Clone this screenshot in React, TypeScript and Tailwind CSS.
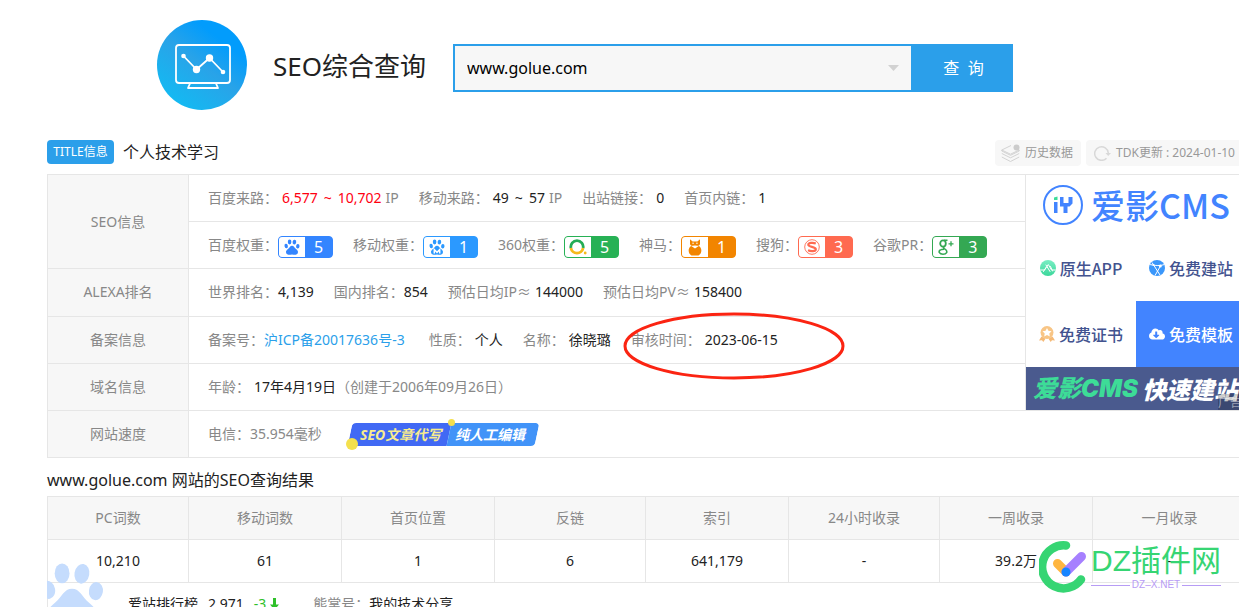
import { useState } from 'react';
import type { ReactNode } from 'react';
import { FaCloudDownloadAlt } from 'react-icons/fa';

function LogoMark() {
    return (
        <svg width="90" height="90" viewBox="0 0 90 90" className="shrink-0" aria-hidden="true">
            <defs>
                <linearGradient id="logo-bg" x1="0.2" y1="0.9" x2="0.8" y2="0.1">
                    <stop offset="0" stopColor="#14b9f2" />
                    <stop offset="0.5" stopColor="#29a3e8" />
                    <stop offset="0.85" stopColor="#029cfc" />
                </linearGradient>
            </defs>
            <circle cx="45" cy="45" r="45" fill="url(#logo-bg)" />
            <g fill="none" stroke="#fff" strokeWidth="1.8" strokeLinejoin="round">
                <rect x="19" y="25" width="54" height="38" rx="3" />
                <path d="M33 63.500L31 68H61L59 63.500" />
                <path d="M26.500 36L39.500 49.500L52.500 38L66 52" />
            </g>
            <g fill="#fff">
                <circle cx="26.500" cy="36" r="2.300" />
                <circle cx="39.500" cy="49.500" r="3.700" />
                <circle cx="52.500" cy="38" r="3.700" />
                <circle cx="66" cy="52" r="2.300" />
            </g>
        </svg>
    );
}

function Paw({ color, size = 16, mobile = false }: { color: string; size?: number; mobile?: boolean }) {
    return (
        <svg width={size} height={size} viewBox="0 0 16 16" aria-hidden="true">
            <g fill={color}>
                <ellipse cx="2.200" cy="7" rx="1.700" ry="2.200" transform="rotate(-12 2.200 7)" />
                <ellipse cx="5.600" cy="3" rx="1.800" ry="2.400" />
                <ellipse cx="10.400" cy="3.100" rx="1.800" ry="2.400" transform="rotate(10 10.400 3.100)" />
                <ellipse cx="13.800" cy="7.300" rx="1.700" ry="2.200" transform="rotate(8 13.800 7.300)" />
                <path d="M8 6.700C9.900 6.700 10.500 8.700 12 10C13.400 11.200 14.300 12 13.900 13.700C13.400 15.900 11 15.900 8 15.500C5 15.900 2.600 15.900 2.100 13.700C1.700 12 2.600 11.200 4 10C5.500 8.700 6.100 6.700 8 6.700Z" />
            </g>
            {mobile && <path d="M5.300 14.500V10.500L8 13.300L10.700 10.500V14.500" fill="none" stroke="#fff" strokeWidth="1.500" />}
        </svg>
    );
}

function Ring360() {
    return (
        <svg width="18" height="16" viewBox="0 0 18 16" aria-hidden="true">
            <g fill="none" strokeWidth="2.800">
                <path d="M1.900 9A6.200 6.200 0 1 1 14.100 9" stroke="#25ad56" />
                <path d="M1.900 9A6.200 6.200 0 0 0 14.100 9" stroke="#f6b91c" />
            </g>
            <circle cx="16.200" cy="14" r="1.400" fill="#f6b91c" />
        </svg>
    );
}

function Shenma() {
    return (
        <svg width="14" height="17" viewBox="0 0 14 17" aria-hidden="true">
            <path d="M2 0.300L4.600 2.600H9.400L12 0.300V4.500C12 5.700 11.300 6.300 10.700 6.700H3.300C2.700 6.300 2 5.700 2 4.500Z" fill="#f28500" />
            <path d="M3.200 7C-0.500 9 0 14.500 3.500 16.500H10.500C14 14.500 14.500 9 10.800 7L7 9.500Z" fill="#f28500" />
            <path d="M4.200 4.200H6M8 4.200H9.800M6.200 6.500L7 7.600L7.800 6.500" fill="none" stroke="#fff" strokeWidth="0.900" />
        </svg>
    );
}

function Sogou() {
    return (
        <svg width="16" height="16" viewBox="0 0 16 16" fill="none" stroke="#ff6a50" aria-hidden="true">
            <circle cx="8" cy="8" r="7.300" strokeWidth="0.900" />
            <path d="M11.800 4.600C9.500 3.600 4.300 3.500 4.300 5.800C4.300 8.300 11.800 7.500 11.800 10.200C11.800 12.700 6.500 12.500 4 11.200" strokeWidth="2.200" />
        </svg>
    );
}

function GooglePlus() {
    return (
        <svg width="16" height="16" viewBox="0 0 16 16" fill="none" stroke="#34a853" aria-hidden="true">
            <ellipse cx="5" cy="4.500" rx="2.800" ry="3.100" strokeWidth="1.800" />
            <path d="M6 1.300H9.500M6.500 7.500C4.500 8.500 5.500 9.300 7 10.200C10.500 12.500 8.500 15.200 5 15.200C1.300 15.200 0 12.500 2.300 11C3.300 10.300 4.600 10.200 6 10.200" strokeWidth="1.500" />
            <path d="M13 2.300V7.300M10.500 4.800H15.500" strokeWidth="1.300" />
        </svg>
    );
}

function AppIcon() {
    return (
        <svg width="16" height="16" viewBox="0 0 16 16" aria-hidden="true">
            <defs>
                <linearGradient id="app-bg" x1="0" y1="0" x2="0" y2="1">
                    <stop offset="0" stopColor="#7aeec4" />
                    <stop offset="1" stopColor="#3bd79b" />
                </linearGradient>
            </defs>
            <circle cx="8" cy="8" r="8" fill="url(#app-bg)" />
            <path d="M0.800 10H4.500L8.300 4.500L11.500 10H15.200M3.500 11.500L6 7.500M6 5L10 11.500M10.500 6.500L12.500 11" fill="none" stroke="#fff" strokeWidth="1" strokeLinecap="round" />
        </svg>
    );
}

function Globe() {
    return (
        <svg width="16" height="16" viewBox="0 0 16 16" aria-hidden="true">
            <circle cx="8" cy="8" r="8" fill="#3a97fb" />
            <path d="M0.500 4.500C4 5 9 6.500 15.500 4.500M3 2.500L11 15M11.500 6L6 15.500" fill="none" stroke="#fff" strokeWidth="1" />
            <circle cx="11.300" cy="6" r="1.500" fill="#fff" />
            <circle cx="4.500" cy="5" r="1.100" fill="#fff" />
        </svg>
    );
}

function Medal() {
    return (
        <svg width="16" height="16" viewBox="0 0 16 16" aria-hidden="true">
            <circle cx="8" cy="6.500" r="6.500" fill="#f8c585" />
            <path d="M8 2L9.400 4.800L12.500 5.200L10.300 7.400L10.800 10.500L8 9L5.200 10.500L5.700 7.400L3.500 5.200L6.600 4.800Z" fill="#fff" />
            <path d="M2.500 10.500L0 14.500L3 14.300L4.300 16L6.500 12.800ZM13.500 10.500L16 14.500L13 14.300L11.700 16L9.500 12.800Z" fill="#f5b975" />
        </svg>
    );
}

const BADGE_COLORS = {
    baidu: 'border-[#3385ff] bg-[#3385ff]',
    mobile: 'border-[#2b99ff] bg-[#2b99ff]',
    so360: 'border-[#27b155] bg-[#27b155]',
    shenma: 'border-[#f28500] bg-[#f28500]',
    sogou: 'border-[#ff6a50] bg-[#ff6a50]',
    google: 'border-[#34a853] bg-[#34a853]',
};

const weights: { label: string; kind: keyof typeof BADGE_COLORS; value: number; icon: ReactNode }[] = [
    { label: '百度权重：', kind: 'baidu', value: 5, icon: <Paw color="#3385ff" /> },
    { label: '移动权重：', kind: 'mobile', value: 1, icon: <Paw color="#2b99ff" mobile /> },
    { label: '360权重：', kind: 'so360', value: 5, icon: <Ring360 /> },
    { label: '神马：', kind: 'shenma', value: 1, icon: <Shenma /> },
    { label: '搜狗：', kind: 'sogou', value: 3, icon: <Sogou /> },
    { label: '谷歌PR：', kind: 'google', value: 3, icon: <GooglePlus /> },
];

const resultCols = [
    { name: 'PC词数', value: '10,210', width: 'w-[141px]' },
    { name: '移动词数', value: '61', width: 'w-[153px]' },
    { name: '首页位置', value: '1', width: 'w-[153px]' },
    { name: '反链', value: '6', width: 'w-[151px]' },
    { name: '索引', value: '641,179', width: 'w-[143px]' },
    { name: '24小时收录', value: '-', width: 'w-[151px]' },
    { name: '一周收录', value: '39.2万', width: 'w-[153px]' },
    { name: '一月收录', value: '-', width: '' },
];

function Item({ label, children }: { label: string; children: ReactNode }) {
    return (
        <span className="flex items-center whitespace-nowrap">
            {label}
            {children}
        </span>
    );
}

function Range({ from, to }: { from: string; to: string }) {
    return (
        <span className="mx-1 flex gap-[6px]">
            <span>{from}</span>
            <span>~</span>
            <span>{to}</span>
        </span>
    );
}

function Row({ title, rowSpan, colSpan, children, ad }: { title?: string; rowSpan?: number; colSpan?: number; children: ReactNode; ad?: ReactNode }) {
    return (
        <tr className="h-[47px]">
            {title && (
                <th scope="row" rowSpan={rowSpan} className="border border-[#e6e6e6] bg-[#f7f7f7] font-normal">
                    {title}
                </th>
            )}
            <td colSpan={colSpan} className="border border-[#e6e6e6] pl-[19px]">
                <div className="flex items-center gap-5">{children}</div>
            </td>
            {ad}
        </tr>
    );
}

function AdPanel() {
    return (
        <div className="relative text-base font-medium leading-6 text-[#43538f] font-['Noto_Sans_CJK_SC',sans-serif]">
            <a href="#cms" className="flex h-[60px] items-center gap-2 pl-[17px] text-[#4284ff]">
                <svg width="40" height="40" viewBox="0 0 40 40" aria-hidden="true">
                    <circle cx="20" cy="20" r="19" fill="none" stroke="#4284ff" strokeWidth="2" />
                    <path d="M11 12.500L14.500 11.500V15H11Z" fill="#3ddc97" />
                    <path d="M11 17H14.500V28H11ZM17 12H20.500V18H25.500V12H29.500V18.500L26.500 21.500H24.500V28H20.500V21.500H17Z" fill="#4284ff" />
                </svg>
                <span className="text-[34px] leading-10">爱影CMS</span>
            </a>
            <div className="grid grid-cols-2">
                <a href="#app" className="flex h-[66px] items-center justify-center gap-1">
                    <AppIcon />
                    原生APP
                </a>
                <a href="#site" className="flex h-[66px] items-center justify-center gap-1">
                    <Globe />
                    免费建站
                </a>
                <a href="#cert" className="flex h-[66px] items-center justify-center gap-1">
                    <Medal />
                    免费证书
                </a>
                <a href="#template" className="flex h-[66px] items-center justify-center gap-1 bg-[#4284ff] text-white">
                    <FaCloudDownloadAlt size={16} />
                    免费模板
                </a>
            </div>
            <a href="#build" className="flex h-[43px] items-center overflow-hidden whitespace-nowrap bg-[#4a5a8e] pl-[7px] text-2xl font-black italic text-white">
                <span className="mr-1 text-[#3ddc97] font-['Inter','Noto_Sans_CJK_SC',sans-serif]">爱影CMS</span>
                快速建站
            </a>
            <span className="absolute bottom-0 right-0 bg-black/20 pr-1 text-xs font-normal leading-4 text-white/50">广告</span>
        </div>
    );
}

function WritingBanner() {
    return (
        <a href="#writing" className="relative ml-2 text-sm font-bold italic leading-[23px]">
            <span className="flex -skew-x-12 overflow-hidden rounded-sm">
                <span className="bg-[#4169f4] pl-[10px] pr-2 text-[#f8ec8e]">
                    <span className="block skew-x-12">SEO文章代写</span>
                </span>
                <span className="bg-[#4193f8] pl-[6px] pr-3 text-white">
                    <span className="block skew-x-12">纯人工编辑</span>
                </span>
            </span>
            <span className="absolute -bottom-1 -left-1 size-3 rounded-full bg-[#f4e04d]" />
            <span className="absolute -top-1 left-[98px] size-[7px] rounded-full bg-[#f4e04d]" />
        </a>
    );
}

function Watermark() {
    return (
        <div className="pointer-events-none absolute bottom-[14px] right-[18px] flex items-center gap-1">
            <svg width="48" height="52" viewBox="0 0 48 52" fill="none" strokeLinecap="round" aria-hidden="true">
                <path d="M27 4.500A21.500 21.500 0 1 0 42 38.500" stroke="#36d573" strokeWidth="8.500" />
                <path d="M18.500 22.500L27 31" stroke="#ffb640" strokeWidth="9" />
                <path d="M27 31L42.500 15.500" stroke="#a680ff" strokeWidth="9" />
                <circle cx="27" cy="31" r="4.500" fill="#1785ff" />
            </svg>
            <div className="font-['Liberation_Sans','Noto_Sans_CJK_SC',sans-serif]">
                <div className="text-[30px] leading-9 text-[#36d573]">DZ插件网</div>
                <div className="flex items-center gap-[2px] text-[10px] leading-3 text-[#b79cf5]">
                    <span className="h-px flex-1 bg-[#b79cf5]" />
                    DZ–X.NET
                    <span className="h-px flex-1 bg-[#b79cf5]" />
                </div>
            </div>
        </div>
    );
}

export default function App() {
    const [domain, setDomain] = useState('www.golue.com');

    return (
        <div className="relative h-screen overflow-hidden bg-white pl-[47px] text-sm leading-5 text-[#888] font-['Noto_Sans','Noto_Sans_CJK_SC',sans-serif]">
            <div className="min-w-[1200px]">
                <header className="flex items-center pl-[110px] pt-5">
                    <LogoMark />
                    <h1 className="ml-[26px] mt-[2px] w-[180px] whitespace-nowrap text-[26px] leading-9 text-[#222]">SEO综合查询</h1>
                    <form className="mt-[6px] flex h-12 w-[560px]" onSubmit={(e) => e.preventDefault()}>
                        <div className="flex flex-1 items-center border-2 border-r-0 border-[#2b9fea] bg-[#f7f7f7]">
                            <input
                                aria-label="域名"
                                value={domain}
                                onChange={(e) => setDomain(e.target.value)}
                                className="h-full min-w-0 flex-1 px-3 text-base text-black outline-none"
                            />
                            <button type="button" aria-label="查询历史" className="px-3">
                                <svg width="11" height="6" viewBox="0 0 11 6" aria-hidden="true">
                                    <path d="M0 0H11L5.500 6Z" fill="#d2d2d2" />
                                </svg>
                            </button>
                        </div>
                        <button type="submit" className="w-[102px] whitespace-pre bg-[#2b9fea] pl-[3px] text-base text-white">
                            查{'  '}询
                        </button>
                    </form>
                </header>

                <div className="mt-[30px] flex h-[26px] items-start justify-between">
                    <div className="flex items-center">
                        <span className="w-[67px] whitespace-nowrap rounded-sm bg-[#2b9fea] text-center text-xs leading-6 text-white">TITLE信息</span>
                        <span className="ml-[9px] text-base leading-6 text-[#222]">个人技术学习</span>
                    </div>
                    <div className="flex gap-[5px] text-xs text-[#999]">
                        <button type="button" className="flex h-[26px] w-[86px] items-center gap-[5px] whitespace-nowrap rounded-sm bg-[#f7f7f7] pl-[6px]">
                            <svg width="19" height="19" viewBox="0 0 19 19" fill="none" stroke="#d2d2d2" aria-hidden="true">
                                <path d="M10 1.500L0.800 6L9.500 10.200L18.200 6L15 4.300M0.800 9.500L9.500 13.800L18.200 9.500M0.800 13L9.500 17.500L18.200 13M0.800 6V7L9.500 11.300L18.200 7V6" />
                                <circle cx="15.500" cy="3.500" r="3" fill="#ccc" stroke="none" />
                            </svg>
                            历史数据
                        </button>
                        <button type="button" className="flex h-[26px] items-center gap-[5px] whitespace-nowrap rounded-sm bg-[#f7f7f7] pl-2 pr-3">
                            <svg width="17" height="16" viewBox="0 0 17 16" fill="none" stroke="#d8d8d8" aria-hidden="true">
                                <path d="M12.500 13.200A6.800 6.800 0 1 1 14.300 8" strokeWidth="1.500" />
                                <path d="M11.500 8H17L14.200 11Z" fill="#d8d8d8" stroke="none" />
                            </svg>
                            TDK更新 : 2024-01-10
                        </button>
                    </div>
                </div>

                <table className="mt-2 w-full table-fixed border-collapse">
                    <colgroup>
                        <col className="w-[141px]" />
                        <col />
                        <col className="w-[221px]" />
                    </colgroup>
                    <tbody>
                        <Row
                            title="SEO信息"
                            rowSpan={2}
                            ad={
                                <td rowSpan={5} className="border border-[#e6e6e6] p-0 align-top">
                                    <AdPanel />
                                </td>
                            }
                        >
                            <Item label="百度来路：">
                                <span className="text-[#f01]">
                                    <Range from="6,577" to="10,702" />
                                </span>
                                IP
                            </Item>
                            <Item label="移动来路：">
                                <span className="text-[#222]">
                                    <Range from="49" to="57" />
                                </span>
                                IP
                            </Item>
                            <Item label="出站链接：">
                                <span className="ml-1 text-[#222]">0</span>
                            </Item>
                            <Item label="首页内链：">
                                <span className="ml-1 text-[#222]">1</span>
                            </Item>
                        </Row>
                        <Row>
                            {weights.map((w) => (
                                <Item key={w.kind} label={w.label}>
                                    <span className={`mt-1 flex h-[22px] w-[55px] overflow-hidden rounded border ${BADGE_COLORS[w.kind]}`}>
                                        <span className="flex w-[26px] items-center justify-center bg-white">{w.icon}</span>
                                        <span className="flex-1 text-center text-base leading-5 text-white">{w.value}</span>
                                    </span>
                                </Item>
                            ))}
                        </Row>
                        <Row title="ALEXA排名">
                            <Item label="世界排名：">
                                <span className="text-[#222]">4,139</span>
                            </Item>
                            <Item label="国内排名：">
                                <span className="text-[#222]">854</span>
                            </Item>
                            <Item label="预估日均IP≈">
                                <span className="ml-1 text-[#222]">144000</span>
                            </Item>
                            <Item label="预估日均PV≈">
                                <span className="ml-1 text-[#222]">158400</span>
                            </Item>
                        </Row>
                        <Row title="备案信息">
                            <Item label="备案号：">
                                <a href="#icp" className="mr-1 text-[#2b9fea]">沪ICP备20017636号-3</a>
                            </Item>
                            <Item label="性质：">
                                <span className="ml-1 text-[#222]">个人</span>
                            </Item>
                            <Item label="名称：">
                                <span className="ml-1 text-[#222]">徐晓璐</span>
                            </Item>
                            <span className="relative">
                                <Item label="审核时间：">
                                    <span className="ml-1 text-[#222]">2023-06-15</span>
                                </Item>
                                <svg width="222" height="68" viewBox="0 0 222 68" className="pointer-events-none absolute -left-2 -top-[18px] max-w-none" aria-hidden="true">
                                    <ellipse cx="111" cy="34" rx="109" ry="32" fill="none" stroke="#fb2412" strokeWidth="3" />
                                </svg>
                            </span>
                        </Row>
                        <Row title="域名信息">
                            <Item label="年龄：">
                                <span className="ml-1 text-[#222]">17年4月19日</span>（创建于2006年09月26日）
                            </Item>
                        </Row>
                        <Row title="网站速度" colSpan={2}>
                            <Item label="电信：">35.954毫秒</Item>
                            <WritingBanner />
                        </Row>
                    </tbody>
                </table>

                <h2 className="pb-1 pt-[10px] text-base leading-6 text-[#222]">www.golue.com 网站的SEO查询结果</h2>

                <table className="w-full table-fixed border-collapse text-center">
                    <thead>
                        <tr className="h-[43px] bg-[#f7f7f7]">
                            {resultCols.map((c) => (
                                <th key={c.name} scope="col" className={`border border-[#e6e6e6] font-normal ${c.width}`}>
                                    {c.name}
                                </th>
                            ))}
                        </tr>
                    </thead>
                    <tbody>
                        <tr className="h-[43px] text-[#222]">
                            {resultCols.map((c) => (
                                <td key={c.name} className="border border-[#e6e6e6]">{c.value}</td>
                            ))}
                        </tr>
                    </tbody>
                </table>

                <div className="flex gap-[10px] border-l border-[#e6e6e6] pl-20 pt-[11px] text-[#222]">
                    <span>爱站排行榜</span>
                    <span>2,971</span>
                    <span className="flex items-center gap-1 text-[#2fc02a]">
                        -3
                        <svg width="9" height="12" viewBox="0 0 9 12" aria-hidden="true">
                            <path d="M3 0H6V6.500H9L4.500 12L0 6.500H3Z" fill="#2fc02a" />
                        </svg>
                    </span>
                    <span className="ml-6 text-[#888]">
                        熊掌号：<span className="text-[#222]">我的技术分享</span>
                    </span>
                </div>
            </div>

            <div className="pointer-events-none absolute -bottom-5 left-[47px] w-[58px] overflow-hidden">
                <div className="-ml-2">
                    <Paw color="#c5dcfd" size={66} />
                </div>
            </div>
            <Watermark />
        </div>
    );
}
